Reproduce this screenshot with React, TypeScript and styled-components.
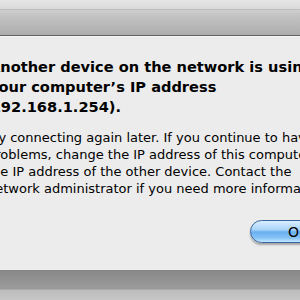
import React from "react";
import styled, { createGlobalStyle } from "styled-components";

const Global = createGlobalStyle`
  html, body { margin: 0; padding: 0; }
  body {
    width: 300px;
    height: 300px;
    overflow: hidden;
    background: #c2c2c2;
    font-family: "DejaVu Sans", "Lucida Grande", sans-serif;
  }
`;

const Screen = styled.div`
  width: 300px;
  height: 300px;
  overflow: hidden;
  display: flex;
  flex-direction: column;
`;

const TitleStrip = styled.div`
  height: 9px;
  flex: none;
  background: linear-gradient(#e6e6e6, #dadada);
  border-bottom: 1px solid #bcbcbc;
`;

const ToolbarBand = styled.div`
  height: 25px;
  flex: none;
  background: linear-gradient(#cfcfcf, #c4c4c4 20%, #adadad);
  border-bottom: 1px solid #636363;
`;

const Sheet = styled.div`
  height: 233px;
  flex: none;
  background: #ececec;
  border-top: 1px solid #f4f4f4;
  overflow: hidden;
`;

const SheetBody = styled.div`
  width: 460px;
  padding-top: 20px;
  display: flex;
  flex-direction: column;
`;

const Heading = styled.div`
  margin-left: -11px;
  font-weight: bold;
  font-size: 14.6px;
  line-height: 20px;
  color: #000;
`;

const Info = styled.div`
  margin-left: -13px;
  margin-top: 12px;
  font-size: 13px;
  line-height: 17px;
  color: #000;
`;

const Line = styled.span<{ $shift?: number }>`
  display: block;
  white-space: nowrap;
  margin-left: ${(p) => p.$shift ?? 0}px;
`;

const ButtonRow = styled.div`
  margin-top: 23px;
  padding-left: 250px;
  display: flex;
`;

const AquaButton = styled.button`
  width: 96px;
  height: 23px;
  border-radius: 12px;
  border: 1px solid #3a64a0;
  background: linear-gradient(
    #d8eefe 0%,
    #a8d4fa 42%,
    #6ab0ef 52%,
    #85c3f6 80%,
    #c4e8ff 100%
  );
  box-shadow: 0 2px 2px rgba(0, 0, 0, 0.3);
  font-family: "DejaVu Sans", "Lucida Grande", sans-serif;
  font-size: 14px;
  color: #000;
  padding: 0;
  display: flex;
  align-items: center;
  justify-content: center;
`;

const ShadowBand = styled.div`
  height: 19px;
  flex: none;
  background: linear-gradient(#878787, #9c9c9c);
  border-bottom: 1px solid #a9a9a9;
`;

const LowerBand = styled.div`
  flex: 1;
  background: linear-gradient(#bdbdbd, #c6c6c6);
`;

export default function App() {
  return (
    <>
      <Global />
      <Screen>
        <TitleStrip />
        <ToolbarBand />
        <Sheet>
          <SheetBody>
            <Heading>
              <Line>Another device on the network is using</Line>
              <Line>your computer’s IP address</Line>
              <Line $shift={-5}>(192.168.1.254).</Line>
            </Heading>
            <Info>
              <Line>Try connecting again later. If you continue to have</Line>
              <Line>problems, change the IP address of this computer or</Line>
              <Line>the IP address of the other device. Contact the</Line>
              <Line>network administrator if you need more information.</Line>
            </Info>
            <ButtonRow>
              <AquaButton>OK</AquaButton>
            </ButtonRow>
          </SheetBody>
        </Sheet>
        <ShadowBand />
        <LowerBand />
      </Screen>
    </>
  );
}
